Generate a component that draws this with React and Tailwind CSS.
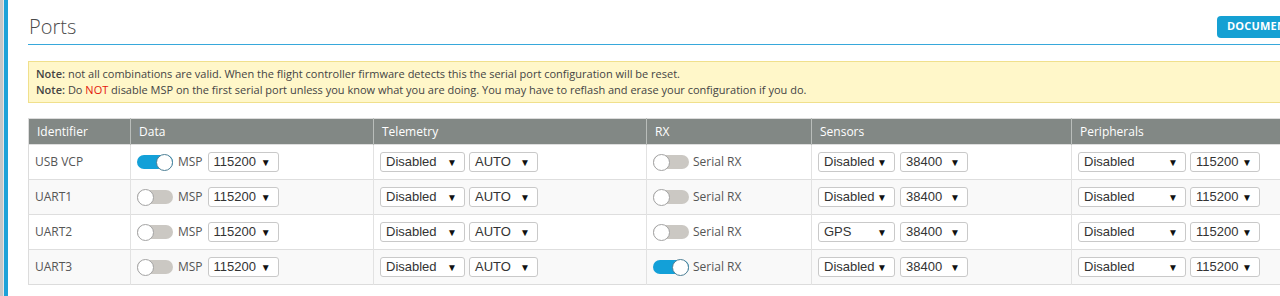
import React from 'react';

const rows = [
  { id: 'USB VCP', msp: true, rx: false, sensor: 'Disabled' },
  { id: 'UART1', msp: false, rx: false, sensor: 'Disabled' },
  { id: 'UART2', msp: false, rx: false, sensor: 'GPS' },
  { id: 'UART3', msp: false, rx: true, sensor: 'Disabled' },
];

function Select({ value, className }) {
  return (
    <div className={`flex h-[20px] items-center justify-between rounded-[3px] border border-[#c9c9c9] bg-white pl-[5px] pr-[7px] font-['Liberation_Sans',Arial,sans-serif] text-[13px] text-[#333] ${className}`}>
      <span>{value}</span>
      <span className="text-[10px] text-[#111]">▼</span>
    </div>
  );
}

function Toggle({ on }) {
  return (
    <div className={`flex h-[14px] w-[36px] items-center rounded-full ${on ? 'justify-end bg-[#13a0d8]' : 'justify-start bg-[#cbc8c3]'}`}>
      <div className={`h-[17px] w-[17px] rounded-full border bg-white ${on ? 'border-[#4d7f95]' : 'border-[#a3a3a3]'}`} />
    </div>
  );
}

export default function App() {
  return (
    <div className="flex h-[296px] w-[1280px] overflow-hidden bg-white font-['Open_Sans',sans-serif]">
      <div className="w-[3px] shrink-0 bg-[#c6c6c6]" />
      <div className="w-[1px] shrink-0 bg-[#e6e6e6]" />
      <div className="w-[4px] shrink-0 bg-[#1da2d8]" />
      <div className="w-[1325px] shrink-0 pl-[20px]">
        {/* title bar */}
        <div className="flex h-[45px] items-center justify-between border-b border-[#37a8db] pt-[9px]">
          <h1 className="pl-[1px] text-[20px] font-light leading-[28px] text-[#4a4a4a]">Ports</h1>
          <button className="h-[22px] w-[116px] rounded-[4px] bg-[#15a0d3] pl-[10px] text-left text-[11px] font-bold tracking-[0.2px] text-white">
            DOCUMENTATION
          </button>
        </div>

        {/* note */}
        <div className="mt-[16px] border border-[#f0e08c] bg-[#fff7c9] px-[7px] py-[4px] text-[11px] leading-[16px] text-[#444]">
          <p>
            <b className="font-semibold">Note:</b> not all combinations are valid. When the flight controller firmware detects this the serial port configuration will be reset.
          </p>
          <p>
            <b className="font-semibold">Note:</b> Do <span className="text-[#e3170d]">NOT</span> disable MSP on the first serial port unless you know what you are doing. You may have to reflash and erase your configuration if you do.
          </p>
        </div>

        {/* ports table */}
        <table className="mt-[15px] w-[1273px] table-fixed border-collapse border border-[#dcdcdc] text-[12px] text-[#555]">
          <colgroup>
            <col className="w-[102px]" />
            <col className="w-[243px]" />
            <col className="w-[273px]" />
            <col className="w-[165px]" />
            <col className="w-[260px]" />
            <col className="w-[230px]" />
          </colgroup>
          <thead>
            <tr className="h-[26px] bg-[#828885] text-left text-white">
              <th className="px-[8px] font-normal">Identifier</th>
              <th className="border-l border-[#b9bdba] px-[8px] font-normal">Data</th>
              <th className="border-l border-[#b9bdba] px-[8px] font-normal">Telemetry</th>
              <th className="border-l border-[#b9bdba] px-[8px] font-normal">RX</th>
              <th className="border-l border-[#b9bdba] px-[8px] font-normal">Sensors</th>
              <th className="border-l border-[#b9bdba] px-[8px] font-normal">Peripherals</th>
            </tr>
          </thead>
          <tbody>
            {rows.map((r, i) => (
              <tr key={r.id} className={`h-[35px] border-t border-[#dedede] ${i % 2 ? 'bg-[#f9f9f9]' : 'bg-white'}`}>
                <td className="px-[6px]">{r.id}</td>
                <td className="border-l border-[#e2e2e2] px-[6px]">
                  <div className="flex items-center gap-[5px]">
                    <Toggle on={r.msp} />
                    <span>MSP</span>
                    <Select value="115200" className="w-[71px]" />
                  </div>
                </td>
                <td className="border-l border-[#e2e2e2] px-[6px]">
                  <div className="flex items-center gap-[4px]">
                    <Select value="Disabled" className="w-[85px]" />
                    <Select value="AUTO" className="w-[69px]" />
                  </div>
                </td>
                <td className="border-l border-[#e2e2e2] px-[6px]">
                  <div className="flex items-center gap-[4px]">
                    <Toggle on={r.rx} />
                    <span>Serial RX</span>
                  </div>
                </td>
                <td className="border-l border-[#e2e2e2] px-[6px]">
                  <div className="flex items-center gap-[5px]">
                    <Select value={r.sensor} className="w-[77px]" />
                    <Select value="38400" className="w-[68px]" />
                  </div>
                </td>
                <td className="border-l border-[#e2e2e2] px-[6px]">
                  <div className="flex items-center gap-[4px]">
                    <Select value="Disabled" className="w-[108px]" />
                    <Select value="115200" className="w-[70px]" />
                  </div>
                </td>
              </tr>
            ))}
          </tbody>
        </table>
      </div>
    </div>
  );
}
